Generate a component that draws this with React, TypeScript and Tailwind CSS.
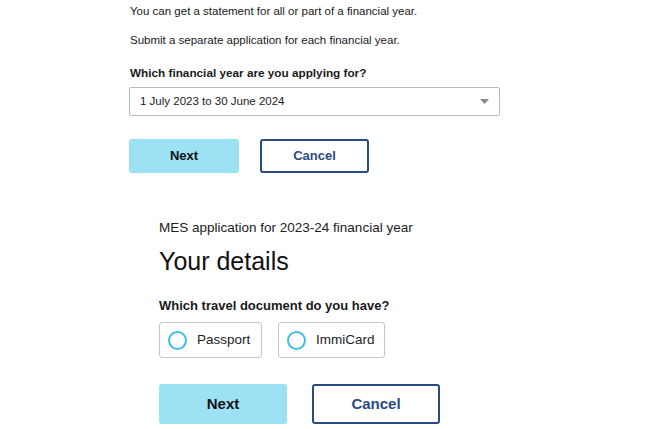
import React from "react";

function Radio({ label }: { label: string }) {
  return (
    <label className="flex items-center h-[36px] px-[8px] border border-[#c8c8c8] rounded-[3px] bg-white">
      <span className="w-[19px] h-[19px] rounded-full border-[2px] border-[#3fbfe3]" />
      <span className="ml-[10px] text-[13.5px] text-[#222]">{label}</span>
    </label>
  );
}

export default function App() {
  return (
    <div className="w-[650px] h-[429px] bg-white overflow-hidden font-['Liberation_Sans',Arial,sans-serif] text-[#1a1a1a]">
      <div className="pl-[129px] pt-[4px]">
        <p className="text-[11.5px] leading-[14px] pl-[1px]">You can get a statement for all or part of a financial year.</p>
        <p className="text-[11.5px] leading-[14px] mt-[15px] pl-[1px]">Submit a separate application for each financial year.</p>
        <p className="text-[11.75px] leading-[14px] font-bold mt-[19px] pl-[1px]">Which financial year are you applying for?</p>
        <div className="mt-[7px] w-[371px] h-[29px] border border-[#b9b9b9] rounded-[2px] flex items-center justify-between pl-[10px] pr-[10px]">
          <span className="text-[11.5px]">1 July 2023 to 30 June 2024</span>
          <svg width="9" height="5" viewBox="0 0 9 5"><path d="M0 0h9L4.5 5z" fill="#888" /></svg>
        </div>
        <div className="flex gap-[21px] mt-[23px]">
          <button className="w-[110px] h-[34px] rounded-[3px] bg-[#9de2f4] text-[13px] font-bold text-[#111]">Next</button>
          <button className="w-[109px] h-[34px] rounded-[3px] border-[2px] border-[#2a4a82] text-[13px] font-bold text-[#2a4a82]">Cancel</button>
        </div>
      </div>
      <div className="pl-[159px] mt-[47px]">
        <p className="text-[13.5px] leading-[16px] text-[#222]">MES application for 2023-24 financial year</p>
        <h1 className="text-[25px] leading-[30px] mt-[10px] text-[#111]">Your details</h1>
        <p className="text-[13px] leading-[16px] font-bold mt-[22px]">Which travel document do you have?</p>
        <div className="flex gap-[16px] mt-[8px]">
          <div className="w-[103px]"><Radio label="Passport" /></div>
          <div className="w-[107px]"><Radio label="ImmiCard" /></div>
        </div>
        <div className="flex gap-[25px] mt-[26px]">
          <button className="w-[128px] h-[40px] rounded-[3px] bg-[#9de2f4] text-[15px] font-bold text-[#111]">Next</button>
          <button className="w-[128px] h-[40px] rounded-[3px] border-[2px] border-[#2a4a82] text-[15px] font-bold text-[#2a4a82]">Cancel</button>
        </div>
      </div>
    </div>
  );
}
